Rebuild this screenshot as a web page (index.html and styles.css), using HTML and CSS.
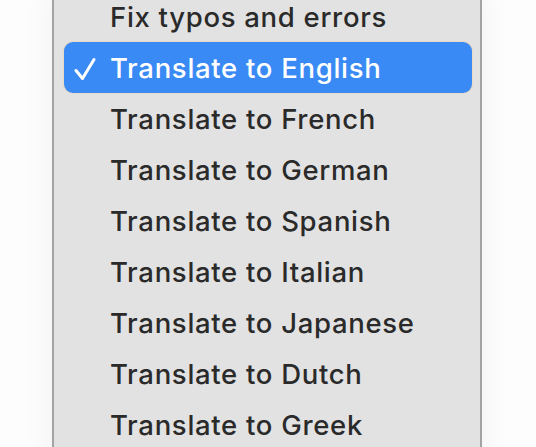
FILE: index.html
```html
<!DOCTYPE html>
<html>
<head>
<meta charset="utf-8">
<link rel="stylesheet" href="styles.css">
</head>
<body>
<div class="menu">
  <div class="item">Fix typos and errors</div>
  <div class="item selected"><svg class="check" width="22" height="24" viewBox="0 0 22 24"><path d="M2 13.5 L8.5 21.5 L20 2.5" fill="none" stroke="#ffffff" stroke-width="3" stroke-linecap="round" stroke-linejoin="round"/></svg>Translate to English</div>
  <div class="item">Translate to French</div>
  <div class="item">Translate to German</div>
  <div class="item">Translate to Spanish</div>
  <div class="item">Translate to Italian</div>
  <div class="item">Translate to Japanese</div>
  <div class="item">Translate to Dutch</div>
  <div class="item">Translate to Greek</div>
</div>
</body>
</html>
```
FILE: styles.css
```css
html, body {
  margin: 0;
  padding: 0;
  background: #fdfdfd;
  overflow: hidden;
}
body {
  width: 536px;
  height: 447px;
  font-family: Inter, "Noto Sans", sans-serif;
}
.menu {
  margin: -9px 0 0 52px;
  width: 430px;
  background: #e2e2e2;
  border-left: 2px solid #a3a3a3;
  border-right: 2px solid #a3a3a3;
  padding: 0 8px 0 10px;
  box-sizing: border-box;
  box-shadow: 0 0 30px rgba(0,0,0,0.06);
  height: 470px;
}
.item {
  position: relative;
  height: 51px;
  line-height: 53px;
  padding-left: 46px;
  font-size: 27.5px;
  font-weight: 500;
  letter-spacing: 0.7px;
  color: #2a2a2a;
  white-space: nowrap;
}
.item.selected {
  background: #3a8af5;
  color: #ffffff;
  border-radius: 9px;
  box-shadow: 0 0 0 1px rgba(235, 215, 185, 0.7);
}
.check {
  position: absolute;
  left: 10px;
  top: 15px;
}
```
